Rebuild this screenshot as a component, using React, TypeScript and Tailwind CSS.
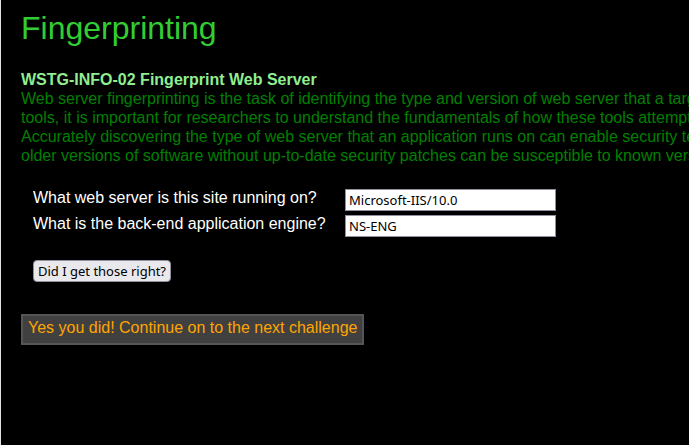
import React from "react";

const summary = [
  "Web server fingerprinting is the task of identifying the type and version of web server that a target",
  "tools, it is important for researchers to understand the fundamentals of how these tools attempt",
  "Accurately discovering the type of web server that an application runs on can enable security testers",
  "older versions of software without up-to-date security patches can be susceptible to known version",
];

const questions = [
  { id: "server", label: "What web server is this site running on?", answer: "Microsoft-IIS/10.0" },
  { id: "engine", label: "What is the back-end application engine?", answer: "NS-ENG" },
];

export default function App() {
  return (
    <main className="min-h-screen overflow-hidden border-l border-[#dfe3e3] bg-black px-5 pt-2 font-['Liberation_Sans',Arial,sans-serif] text-base leading-[19px]">
      <h1 className="text-[32px] leading-10 text-[#32cd32]">Fingerprinting</h1>

      <section className="mt-[22px] whitespace-nowrap text-[#008000]">
        <h2 className="font-bold text-[#90ee90]">WSTG-INFO-02 Fingerprint Web Server</h2>
        {summary.map((line) => (
          <p key={line}>{line}</p>
        ))}
      </section>

      <form className="mt-[23px] px-3" onSubmit={(e) => e.preventDefault()}>
        <div className="grid grid-cols-[290px_211px] gap-x-[22px] gap-y-[3px]">
          {questions.map((q) => (
            <React.Fragment key={q.id}>
              <label htmlFor={q.id} className="whitespace-nowrap text-white">
                {q.label}
              </label>
              <input
                id={q.id}
                type="text"
                defaultValue={q.answer}
                className="mt-px h-[22px] w-full border border-[#8f8f9d] bg-white px-[3px] font-['Noto_Sans',sans-serif] text-[13px] text-black"
              />
            </React.Fragment>
          ))}
        </div>
        <button
          type="submit"
          className="mt-[23px] flex h-[22px] w-[138px] items-center justify-center whitespace-nowrap rounded border border-[#8f8f9d] bg-[#e9e9ed] font-['Noto_Sans',sans-serif] text-[13px] text-black"
        >
          Did I get those right?
        </button>
      </form>

      <a
        href="#next"
        className="mt-8 inline-block whitespace-nowrap border-2 border-[#555555] bg-[#404040] px-[5px] pt-[2px] pb-[6px] text-[#ffa500]"
      >
        Yes you did! Continue on to the next challenge
      </a>
    </main>
  );
}
